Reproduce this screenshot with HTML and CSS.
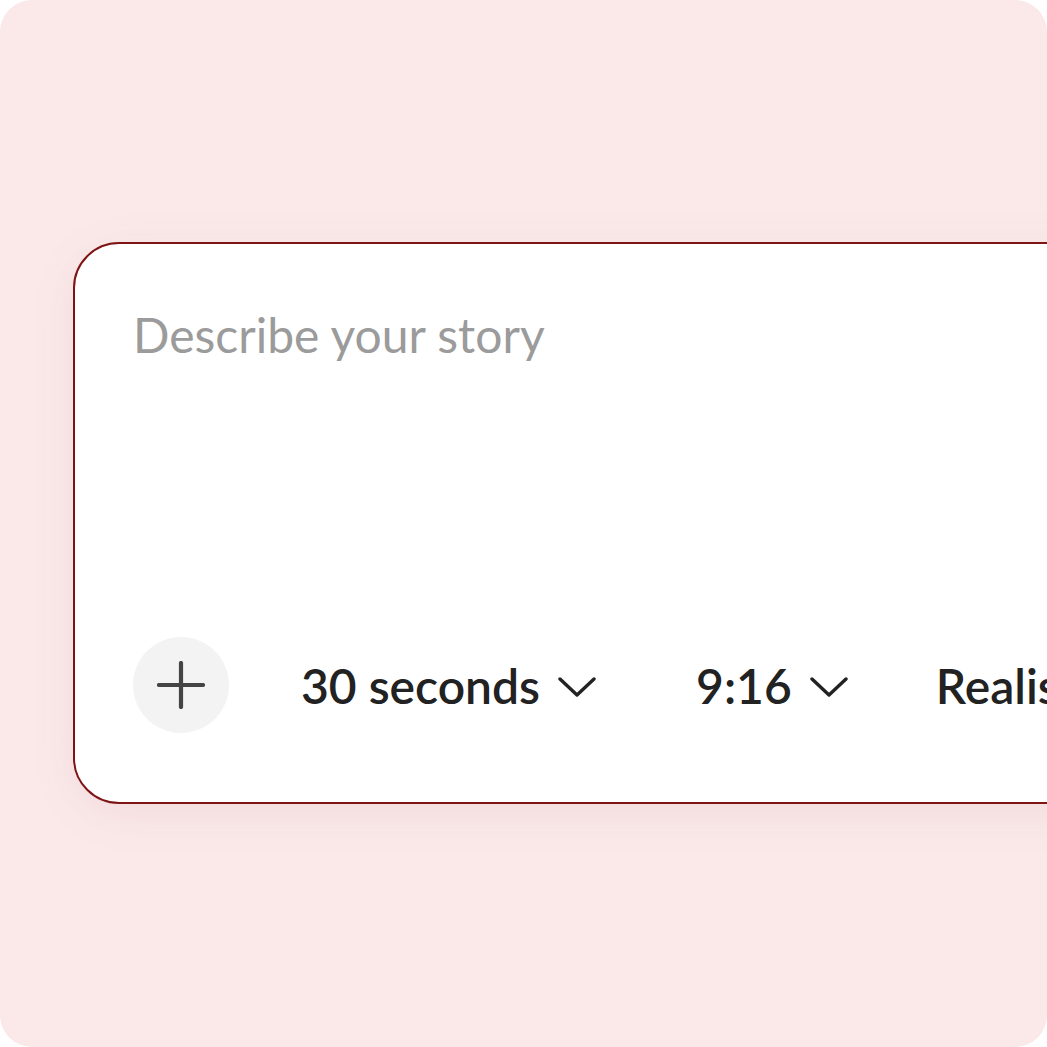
FILE: index.html
```html
<!DOCTYPE html>
<html>
<head>
<meta charset="utf-8">
<link rel="stylesheet" href="styles.css">
</head>
<body>
<div class="frame">
  <div class="card">
    <div class="placeholder">Describe your story</div>
    <div class="toolbar">
      <button class="add" aria-label="Add">
        <svg width="48" height="48" viewBox="0 0 48 48"><path d="M24 2V46M2 24H46" stroke="#444" stroke-width="4.2" stroke-linecap="round" fill="none"/></svg>
      </button>
      <div class="select select-duration">
        <span>30 seconds</span>
        <svg class="chev" width="38" height="22" viewBox="0 0 38 22"><path d="M2 3L19 19L36 3" stroke="#222" stroke-width="3.4" stroke-linecap="round" stroke-linejoin="round" fill="none"/></svg>
      </div>
      <div class="select select-ratio">
        <span>9:16</span>
        <svg class="chev" width="38" height="22" viewBox="0 0 38 22"><path d="M2 3L19 19L36 3" stroke="#222" stroke-width="3.4" stroke-linecap="round" stroke-linejoin="round" fill="none"/></svg>
      </div>
      <div class="select">
        <span>Realistic</span>
      </div>
    </div>
  </div>
</div>
</body>
</html>
```
FILE: styles.css
```css
html, body {
  margin: 0;
  padding: 0;
  background: #ffffff;
}
.frame {
  width: 1047px;
  height: 1047px;
  box-sizing: border-box;
  border-radius: 32px;
  background: #fbe9e9;
  overflow: hidden;
  padding-top: 242px;
  padding-left: 73px;
}
.card {
  width: 1200px;
  height: 562px;
  box-sizing: border-box;
  border: 2px solid #7f1414;
  border-radius: 46px;
  background: #ffffff;
  box-shadow: 0 10px 50px rgba(120, 60, 60, 0.07);
  display: flex;
  flex-direction: column;
  justify-content: space-between;
  padding: 63px 0 69px 58px;
  font-family: Lato, "Open Sans", sans-serif;
}
.placeholder {
  font-size: 48px;
  line-height: 56px;
  color: #9b9b9b;
  font-weight: 400;
}
.toolbar {
  display: flex;
  align-items: center;
  height: 96px;
}
.add {
  width: 96px;
  height: 96px;
  border-radius: 50%;
  border: none;
  background: #f3f3f3;
  display: flex;
  align-items: center;
  justify-content: center;
  padding: 0;
  margin-right: 72px;
}
.select {
  display: flex;
  align-items: center;
  gap: 18px;
  font-size: 48px;
  font-weight: 600;
  color: #222;
  white-space: nowrap;
}
.select-duration {
  margin-right: 100px;
}
.select-ratio {
  margin-right: 88px;
}
.chev {
  display: block;
  margin-top: 4px;
}
```
